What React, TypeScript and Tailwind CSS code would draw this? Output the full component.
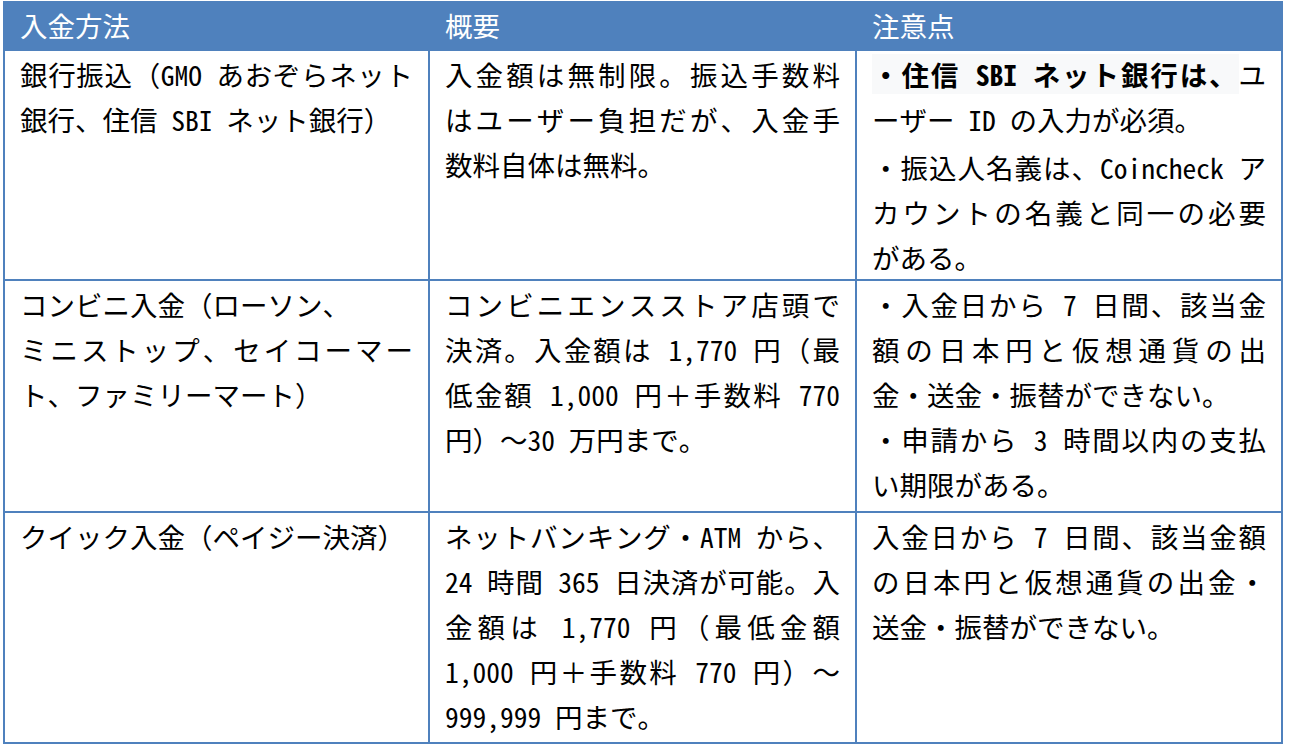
import type { ReactNode } from "react";

type Line = { text: ReactNode; justify?: boolean; gap?: boolean };

const rows: Line[][][] = [
  [
    [
      { text: "銀行振込（GMO あおぞらネット", justify: true },
      { text: "銀行、住信 SBI ネット銀行）" },
    ],
    [
      { text: "入金額は無制限。振込手数料", justify: true },
      { text: "はユーザー負担だが、入金手", justify: true },
      { text: "数料自体は無料。" },
    ],
    [
      {
        text: (
          <>
            <span className="bg-[#f8f9fa] font-bold">・住信 SBI ネット銀行は、</span>ユ
          </>
        ),
        justify: true,
      },
      { text: "ーザー ID の入力が必須。" },
      { text: "・振込人名義は、Coincheck ア", justify: true, gap: true },
      { text: "カウントの名義と同一の必要", justify: true },
      { text: "がある。" },
    ],
  ],
  [
    [
      { text: "コンビニ入金（ローソン、" },
      { text: "ミニストップ、セイコーマー", justify: true },
      { text: "ト、ファミリーマート）" },
    ],
    [
      { text: "コンビニエンスストア店頭で", justify: true },
      { text: "決済。入金額は 1,770 円（最", justify: true },
      { text: "低金額 1,000 円＋手数料 770", justify: true },
      { text: "円）～30 万円まで。" },
    ],
    [
      { text: "・入金日から 7 日間、該当金", justify: true },
      { text: "額の日本円と仮想通貨の出", justify: true },
      { text: "金・送金・振替ができない。" },
      { text: "・申請から 3 時間以内の支払", justify: true },
      { text: "い期限がある。" },
    ],
  ],
  [
    [{ text: "クイック入金（ペイジー決済）" }],
    [
      { text: "ネットバンキング・ATM から、", justify: true },
      { text: "24 時間 365 日決済が可能。入", justify: true },
      { text: "金額は 1,770 円（最低金額", justify: true },
      { text: "1,000 円＋手数料 770 円）～", justify: true },
      { text: "999,999 円まで。" },
    ],
    [
      { text: "入金日から 7 日間、該当金額", justify: true },
      { text: "の日本円と仮想通貨の出金・", justify: true },
      { text: "送金・振替ができない。" },
    ],
  ],
];

const headers = ["入金方法", "概要", "注意点"];

function Cell({ lines }: { lines: Line[] }) {
  return (
    <div className="bg-white px-[15px] pt-px">
      {lines.map((l, i) => (
        <div
          key={i}
          className={`whitespace-nowrap leading-[45px] ${l.gap ? "mt-[3px]" : ""} ${
            l.justify ? "text-justify [text-align-last:justify]" : "text-left"
          }`}
        >
          {l.text}
        </div>
      ))}
    </div>
  );
}

export default function App() {
  return (
    <div
      className="min-h-screen bg-white pt-px pl-[3px] text-black text-[27.5px]"
      style={{ fontFamily: '"Noto Sans Mono CJK JP", "Noto Sans CJK JP", sans-serif' }}
    >
      <div className="grid w-[1280px] grid-cols-[423px_425px_424px] grid-rows-[46px_228px_230px_229px] gap-[2px] bg-[#4f81bd] p-[2px]">
        {headers.map((h) => (
          <div key={h} className="flex items-center bg-[#4f81bd] px-[15px] pb-[1px] text-white">
            {h}
          </div>
        ))}
        {rows.map((row, r) => row.map((cell, c) => <Cell key={`${r}-${c}`} lines={cell} />))}
      </div>
    </div>
  );
}
